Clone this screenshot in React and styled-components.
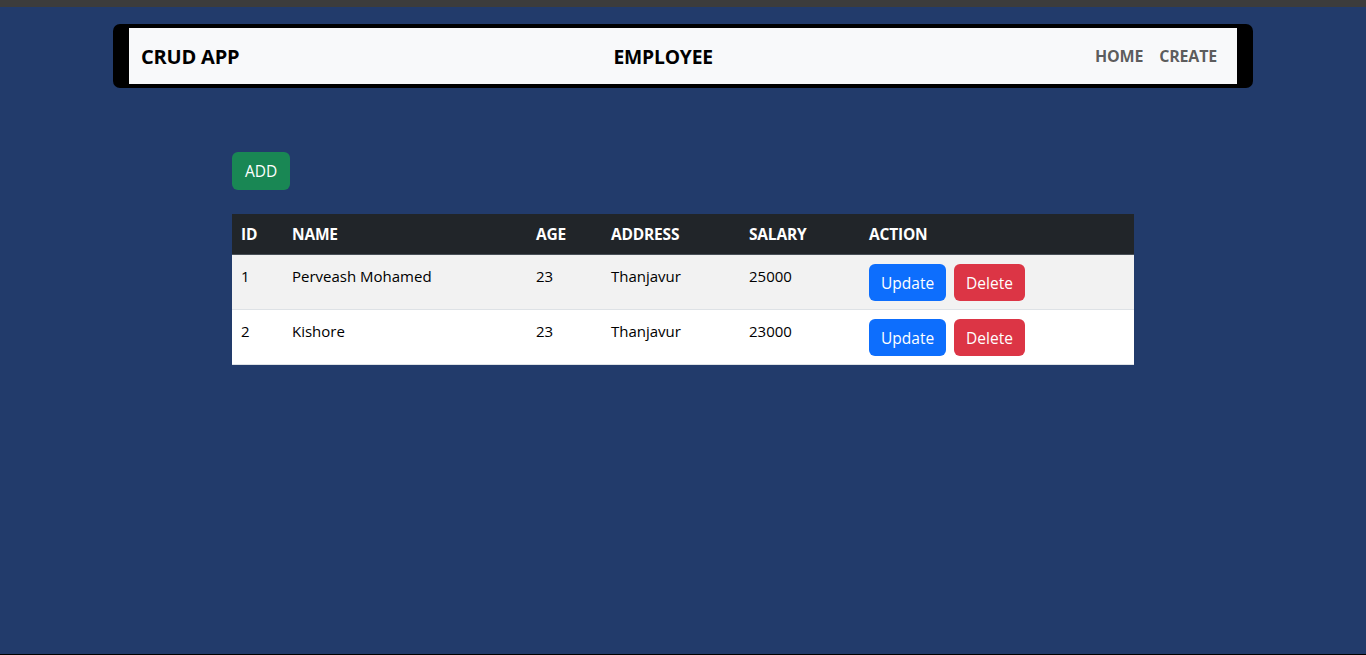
import React from "react";
import styled, { createGlobalStyle } from "styled-components";

const Global = createGlobalStyle`
  html, body { margin: 0; padding: 0; }
  body {
    font-family: "Open Sans", "Noto Sans", sans-serif;
    background: #223b6b;
    color: #212529;
    font-size: 16px;
  }
  * { box-sizing: border-box; }
`;

const Page = styled.div`
  min-height: 100vh;
  display: flex;
  flex-direction: column;
  border-bottom: 1px solid #000;
`;

const TopStrip = styled.div`
  height: 7px;
  background: #3c3c3c;
  flex-shrink: 0;
`;

const Main = styled.main`
  flex: 1;
  padding-top: 17px;
`;

const NavFrame = styled.div`
  width: 1140px;
  margin: 0 auto;
  background: #000;
  border-radius: 7px;
  padding: 4px 16px;
`;

const Nav = styled.nav`
  background: #f8f9fa;
  height: 56px;
  display: flex;
  justify-content: space-between;
  align-items: center;
  padding: 0 12px;
`;

const Brand = styled.span`
  font-size: ${(p) => p.$size}px;
  font-weight: 700;
  color: #000;
  letter-spacing: -0.2px;
`;

const Links = styled.div`
  display: flex;
`;

const NavLink = styled.a`
  font-size: 16px;
  font-weight: 700;
  color: rgba(0, 0, 0, 0.65);
  padding: 8px;
  text-decoration: none;
  letter-spacing: -0.2px;
`;

const Content = styled.section`
  width: 902px;
  margin: 64px auto 0;
`;

const Btn = styled.button`
  font-family: inherit;
  font-size: 15.5px;
  line-height: 24px;
  padding: 6px 12px;
  border: none;
  border-radius: 6px;
  color: #fff;
  background: ${(p) => p.$bg};
  cursor: pointer;
`;

const AddBtn = styled(Btn)`
  height: 38px;
  padding: 6px 13px;
  margin-bottom: 24px;
  display: block;
`;

const ActionBtn = styled(Btn)`
  height: 37px;
  margin-right: 8px;
  vertical-align: top;
`;

const Table = styled.table`
  width: 100%;
  border-collapse: collapse;
  table-layout: fixed;
`;

const Th = styled.th`
  background: #212529;
  color: #fff;
  text-align: left;
  font-weight: 700;
  font-size: 15.5px;
  line-height: 24px;
  padding: 8px 9px;
  border-bottom: 1px solid #495057;
  letter-spacing: -0.2px;
`;

const Tr = styled.tr`
  background: ${(p) => (p.$striped ? "#f2f2f2" : "#fff")};
`;

const Td = styled.td`
  font-size: 15px;
  line-height: 24px;
  padding: 9px 9px 7px;
  vertical-align: top;
  color: #000;
  border-bottom: 1px solid #dee2e6;
  height: 55px;
`;

const cols = [
  { label: "ID", w: 51 },
  { label: "NAME", w: 244 },
  { label: "AGE", w: 75 },
  { label: "ADDRESS", w: 138 },
  { label: "SALARY", w: 120 },
  { label: "ACTION", w: 274 },
];

const rows = [
  { id: 1, name: "Perveash Mohamed", age: 23, address: "Thanjavur", salary: 25000 },
  { id: 2, name: "Kishore", age: 23, address: "Thanjavur", salary: 23000 },
];

export default function App() {
  return (
    <>
      <Global />
      <Page>
        <TopStrip />
        <Main>
          <NavFrame>
            <Nav>
              <Brand $size={20}>CRUD APP</Brand>
              <Brand $size={19.3}>EMPLOYEE</Brand>
              <Links>
                <NavLink href="#">HOME</NavLink>
                <NavLink href="#">CREATE</NavLink>
              </Links>
            </Nav>
          </NavFrame>
          <Content>
            <AddBtn $bg="#198754">ADD</AddBtn>
            <Table>
              <colgroup>
                {cols.map((c) => (
                  <col key={c.label} style={{ width: c.w }} />
                ))}
              </colgroup>
              <thead>
                <tr>
                  {cols.map((c) => (
                    <Th key={c.label}>{c.label}</Th>
                  ))}
                </tr>
              </thead>
              <tbody>
                {rows.map((r, i) => (
                  <Tr key={r.id} $striped={i % 2 === 0}>
                    <Td>{r.id}</Td>
                    <Td>{r.name}</Td>
                    <Td>{r.age}</Td>
                    <Td>{r.address}</Td>
                    <Td>{r.salary}</Td>
                    <Td>
                      <ActionBtn $bg="#0d6efd">Update</ActionBtn>
                      <ActionBtn $bg="#dc3545">Delete</ActionBtn>
                    </Td>
                  </Tr>
                ))}
              </tbody>
            </Table>
          </Content>
        </Main>
      </Page>
    </>
  );
}
